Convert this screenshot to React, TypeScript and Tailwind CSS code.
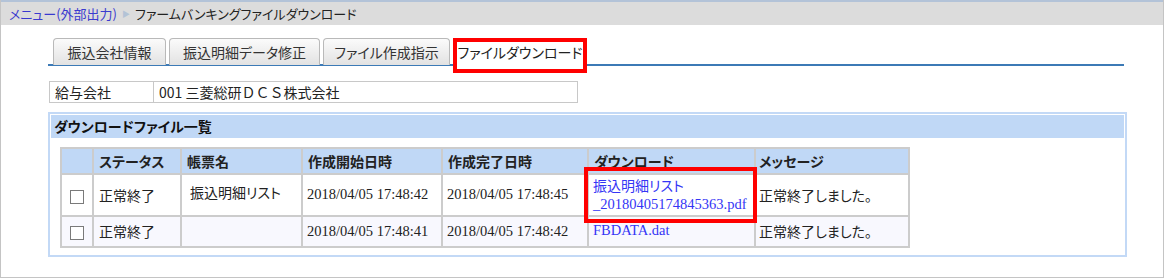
import React from 'react';

const jp = "[font-family:'Noto_Sans_CJK_JP',sans-serif] [font-feature-settings:'palt']";
const serif = "[font-family:'Liberation_Serif','Noto_Sans_CJK_JP',serif]";

const rows = [
  {
    status: '正常終了',
    name: '振込明細リスト',
    start: '2018/04/05 17:48:42',
    end: '2018/04/05 17:48:45',
    file: ['振込明細リスト', '_20180405174845363.pdf'],
    msg: '正常終了しました。',
    marked: true,
  },
  {
    status: '正常終了',
    name: '',
    start: '2018/04/05 17:48:41',
    end: '2018/04/05 17:48:42',
    file: ['FBDATA.dat'],
    msg: '正常終了しました。',
    marked: false,
  },
];

const Tab = ({ label, w }: { label: string; w: string }) => (
  <div
    className={`${w} h-[27px] flex items-center justify-center rounded-t-[4px] border border-b-0 border-[#b9b9b9] bg-gradient-to-b from-[#fbfbfb] to-[#e2e2e2] text-[14px] text-[#333]`}
  >
    {label}
  </div>
);

const App = () => {
  return (
    <div className={`w-[1164px] h-[278px] bg-white border-x border-b border-[#c4c4c4] ${jp}`}>
      {/* --- BREADCRUMB --- */}
      <div className="h-[25px] bg-[#dcdcdc] border-t-2 border-[#b3c3d8] flex items-center pl-[8px] text-[13px]">
        <a href="#" className="text-[#3a3acf]">メニュー(外部出力)</a>
        <span className="mx-[5px] text-[8px] text-[#b3c3d6]">▶</span>
        <span className="text-[#222]">ファームバンキングファイルダウンロード</span>
      </div>

      <div className="pl-[47px] pr-[39px] pt-[13px]">
        {/* --- TABS --- */}
        <div className="relative h-[28px] flex items-start pl-[5px] border-b-2 border-[#3c7ab6]">
          <div className="flex items-start gap-[3px]">
            <Tab label="振込会社情報" w="w-[113px]" />
            <Tab label="振込明細データ修正" w="w-[151px]" />
            <Tab label="ファイル作成指示" w="w-[127px]" />
            <div className="relative z-10 w-[134px] h-[35px] bg-white border-4 border-[#ff0000] flex items-center justify-center pb-[6px] text-[14px] text-[#222]">
              ファイルダウンロード
            </div>
          </div>
        </div>

        {/* --- COMPANY --- */}
        <div className="mt-[15px] ml-[1px] w-[529px] h-[22px] flex border border-[#c8c8c8] text-[14px] text-[#222]">
          <div className="w-[104px] pl-[5px] border-r border-[#c8c8c8] flex items-center">給与会社</div>
          <div className="flex-1 pl-[5px] flex items-center [font-feature-settings:normal]">
            001 三菱総研ＤＣＳ株式会社
          </div>
        </div>

        {/* --- DOWNLOAD LIST --- */}
        <div className="mt-[9px] w-[1079px] h-[145px] border-2 border-[#c3d9f6] p-[1px]">
          <div className="h-[23px] bg-[#c0d8f6] flex items-center pl-[3px] text-[14px] font-bold text-[#111]">
            ダウンロードファイル一覧
          </div>

          <table className="mt-[9px] ml-[9px] border-collapse border-2 border-[#cccccc] text-[14px] text-[#222]">
            <thead>
              <tr className="h-[26px] bg-[#c0d8f6] font-bold text-left">
                <th className="w-[32px] border-2 border-[#cccccc]"></th>
                <th className="w-[88px] border-2 border-[#cccccc] pl-[5px]">ステータス</th>
                <th className="w-[121px] border-2 border-[#cccccc] pl-[5px]">帳票名</th>
                <th className="w-[140px] border-2 border-[#cccccc] pl-[5px]">作成開始日時</th>
                <th className="w-[146px] border-2 border-[#cccccc] pl-[5px]">作成完了日時</th>
                <th className="w-[167px] border-2 border-[#cccccc] pl-[5px]">ダウンロード</th>
                <th className="w-[154px] border-2 border-[#cccccc] pl-[3px]">メッセージ</th>
              </tr>
            </thead>
            <tbody>
              {rows.map((r, i) => (
                <tr key={i} className={i === 0 ? 'h-[42px] bg-white' : 'h-[31px] bg-[#f8f8fe]'}>
                  <td className="border-2 border-[#cccccc] text-center">
                    <span className="inline-block w-[14px] h-[14px] align-middle border border-[#7a7a7a] bg-white"></span>
                  </td>
                  <td className="border-2 border-[#cccccc] pl-[5px]">{r.status}</td>
                  <td className={`border-2 border-[#cccccc] pl-[8px] ${i === 0 ? 'align-top pt-[7px]' : ''}`}>{r.name}</td>
                  <td className={`border-2 border-[#cccccc] pl-[4px] text-[14.5px] ${serif}`}>{r.start}</td>
                  <td className={`border-2 border-[#cccccc] pl-[4px] text-[14.5px] ${serif}`}>{r.end}</td>
                  <td className="relative border-2 border-[#cccccc] pl-[4px] leading-[19px] text-[#3535f5]">
                    {r.file.length === 2 ? (
                      <a href="#" className="block">
                        <span className="block">{r.file[0]}</span>
                        <span className={`block text-[14.5px] ${serif}`}>{r.file[1]}</span>
                      </a>
                    ) : (
                      <a href="#" className={`text-[14.5px] ${serif} pb-[3px] inline-block`}>{r.file[0]}</a>
                    )}
                    {r.marked && (
                      <div className="absolute -left-[5px] -top-[8px] w-[173px] h-[56px] border-4 border-[#ff0000] pointer-events-none"></div>
                    )}
                  </td>
                  <td className="border-2 border-[#cccccc] pl-[3px]">{r.msg}</td>
                </tr>
              ))}
            </tbody>
          </table>
        </div>
      </div>
    </div>
  );
};

export default App;
